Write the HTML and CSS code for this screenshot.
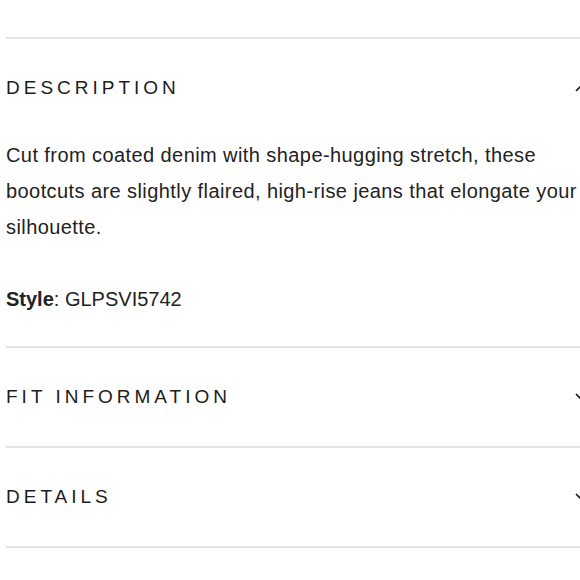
FILE: index.html
```html
<!DOCTYPE html>
<html lang="en">
<head>
    <meta charset="UTF-8">
    <meta name="viewport" content="width=device-width, initial-scale=1.0">
    <title>Product Details</title>
    <link rel="stylesheet" href="styles.css">
</head>
<body>
    <div class="accordion">
        <section class="panel open">
            <div class="panel-head">
                <h2>Description</h2>
                <svg class="chevron" viewBox="0 0 14 8" width="14" height="8"><path d="M1 7 L7 1 L13 7" /></svg>
            </div>
            <div class="panel-body">
                <p class="copy">Cut from coated denim with shape-hugging stretch, these bootcuts are slightly flaired, high-rise jeans that elongate your silhouette.</p>
                <p class="style-code"><strong>Style</strong>: GLPSVI5742</p>
            </div>
        </section>
        <section class="panel">
            <div class="panel-head">
                <h2>Fit Information</h2>
                <svg class="chevron" viewBox="0 0 14 8" width="14" height="8"><path d="M1 1 L7 7 L13 1" /></svg>
            </div>
        </section>
        <section class="panel">
            <div class="panel-head">
                <h2>Details</h2>
                <svg class="chevron" viewBox="0 0 14 8" width="14" height="8"><path d="M1 1 L7 7 L13 1" /></svg>
            </div>
        </section>
        <div class="panel-end"></div>
    </div>
</body>
</html>
```

FILE: styles.css
```css
:root {
    --color-text: #222;
    --color-rule: #e3e3e3;
}
body {
    margin: 0;
    padding: 0;
    background: #fff;
    color: var(--color-text);
    font-family: 'Liberation Sans', Arial, sans-serif;
    overflow: hidden;
}
.accordion {
    width: 590px;
    padding: 37px 0 0 6px;
}
.panel {
    border-top: 2px solid var(--color-rule);
}
.panel-end {
    border-top: 2px solid var(--color-rule);
}
.panel-head {
    height: 98px;
    display: flex;
    align-items: center;
    justify-content: space-between;
}
.panel-head h2 {
    margin: 0;
    font-size: 19px;
    font-weight: 400;
    letter-spacing: 4px;
    text-transform: uppercase;
    color: #1c1c1c;
}
.chevron {
    fill: none;
    stroke: #1c1c1c;
    stroke-width: 1.6;
    margin-right: 7px;
}
.panel-body {
    padding-bottom: 29px;
}
.panel-body p {
    margin: 0 0 36px;
    font-size: 20px;
    line-height: 36px;
}
.panel-body .copy {
    max-width: 574px;
    letter-spacing: 0.42px;
}
.panel-body p:last-child {
    margin-bottom: 0;
}
.panel-body strong {
    font-weight: 700;
}
```
